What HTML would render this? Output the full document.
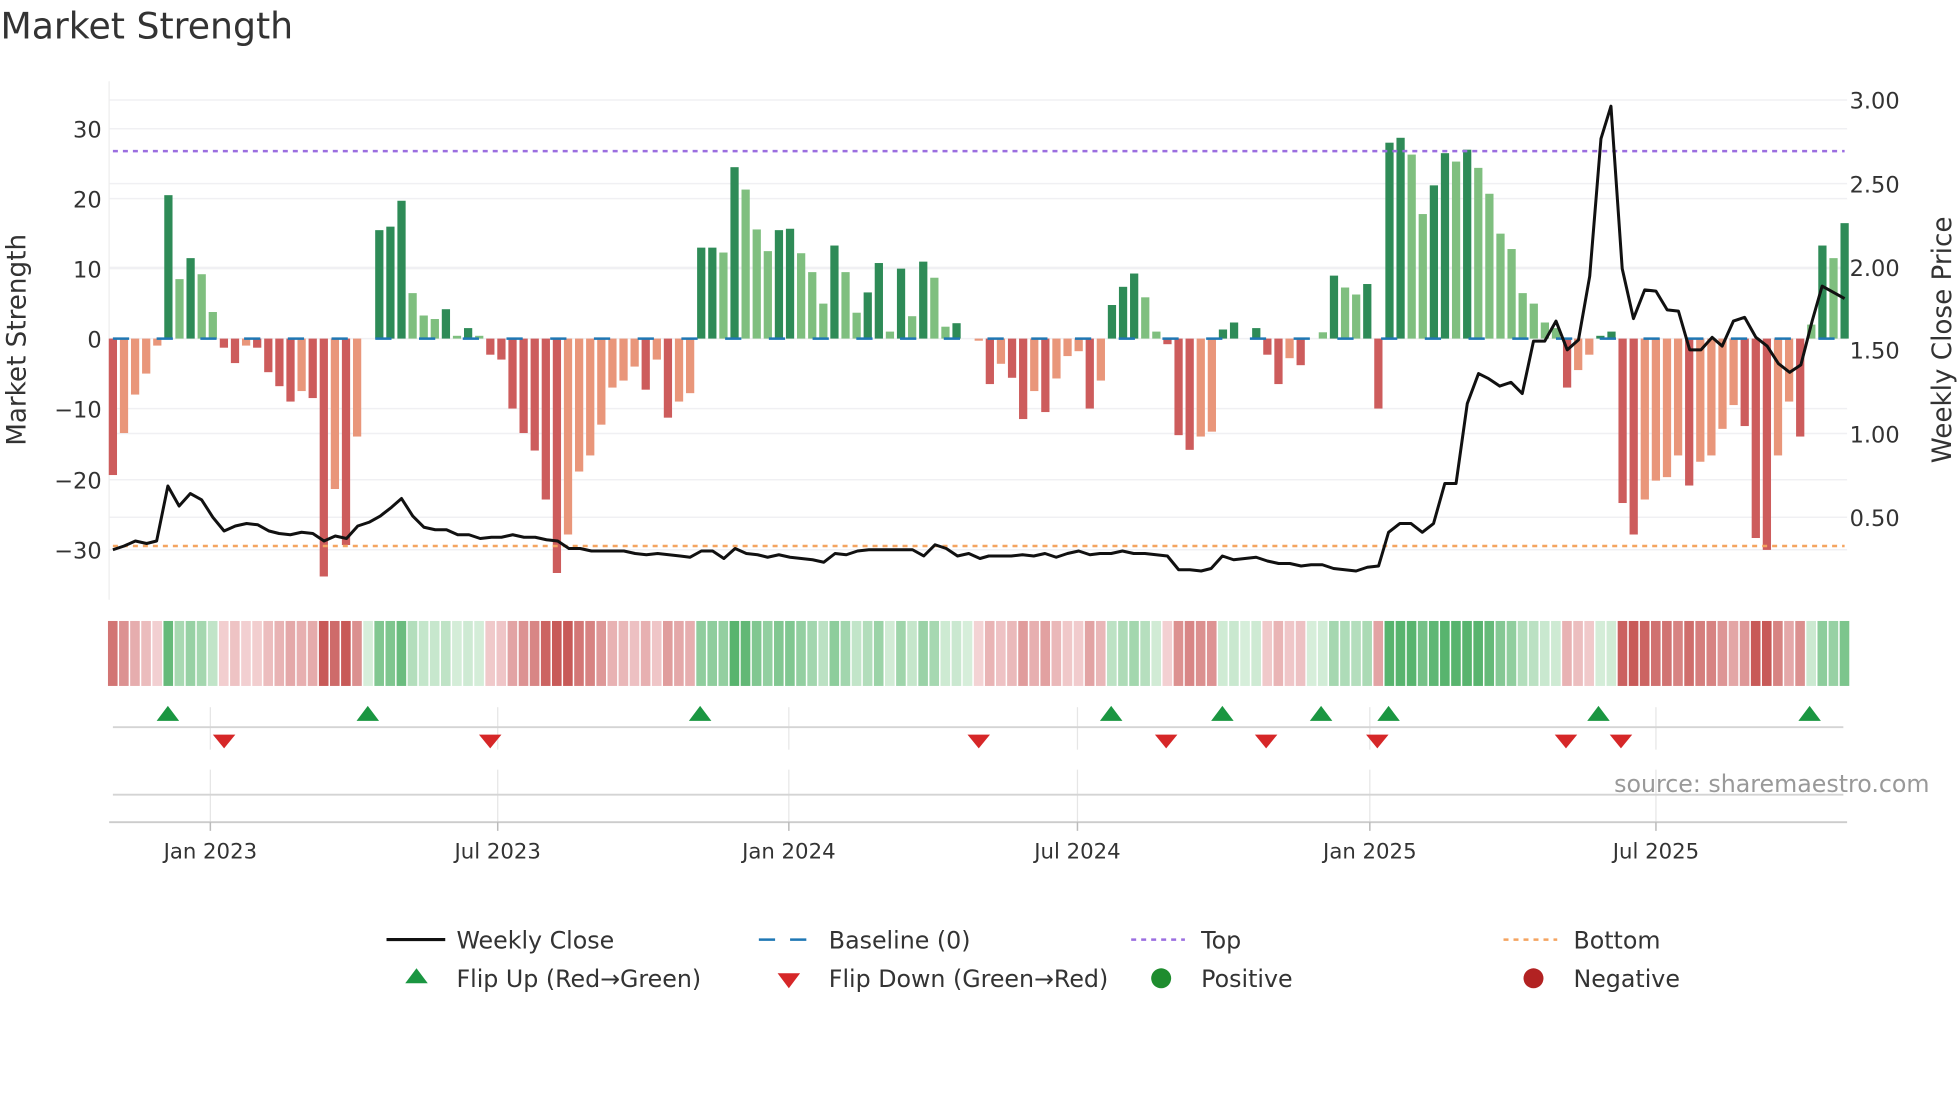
<!DOCTYPE html>
<html><head><meta charset="utf-8"><style>
html,body{margin:0;padding:0;background:#fff;}
svg{display:block;}
text{font-family:"DejaVu Sans","Liberation Sans",sans-serif;fill:#333;}
</style></head><body>
<svg id="s" width="1960" height="1102" viewBox="0 0 1568 882" xmlns="http://www.w3.org/2000/svg">
<rect width="1568" height="882" fill="#fff"/>
<text x="0" y="31" font-size="29">Market Strength</text>
<g id="grid"></g>
<line x1="87" y1="65" x2="87" y2="480" stroke="#eee" stroke-width="1"/>
<g id="bars"></g>
<line x1="90" y1="121" x2="1476" y2="121" stroke="#9b6ee0" stroke-width="2" stroke-dasharray="4,4"/>
<line x1="90" y1="437" x2="1476" y2="437" stroke="#f4a460" stroke-width="2" stroke-dasharray="4,4"/>
<line x1="90" y1="271" x2="1476" y2="271" stroke="#1f77b4" stroke-width="2" stroke-dasharray="13,22"/>
<polyline id="price" fill="none" stroke="#111" stroke-width="2.4" stroke-linejoin="round"/>
<g font-size="18" text-anchor="end">
<text x="81" y="110">30</text><text x="81" y="166">20</text><text x="81" y="222">10</text>
<text x="81" y="278">0</text><text x="81" y="334">−10</text><text x="81" y="391">−20</text><text x="81" y="447">−30</text>
</g>
<g font-size="18">
<text x="1480" y="87">3.00</text><text x="1480" y="154">2.50</text><text x="1480" y="221">2.00</text>
<text x="1480" y="287">1.50</text><text x="1480" y="354">1.00</text><text x="1480" y="421">0.50</text>
</g>
<text transform="translate(20,272) rotate(-90)" font-size="21" text-anchor="middle">Market Strength</text>
<text transform="translate(1561,272) rotate(-90)" font-size="21" text-anchor="middle">Weekly Close Price</text>
<g id="strip"></g>
<g stroke="#e6e6e6" stroke-width="1">
<line x1="168" y1="566" x2="168" y2="600"/><line x1="398" y1="566" x2="398" y2="600"/><line x1="631" y1="566" x2="631" y2="600"/><line x1="862" y1="566" x2="862" y2="600"/><line x1="1096" y1="566" x2="1096" y2="600"/><line x1="1325" y1="566" x2="1325" y2="600"/>
<line x1="168" y1="616" x2="168" y2="658"/><line x1="398" y1="616" x2="398" y2="658"/><line x1="631" y1="616" x2="631" y2="658"/><line x1="862" y1="616" x2="862" y2="658"/><line x1="1096" y1="616" x2="1096" y2="658"/><line x1="1325" y1="616" x2="1325" y2="658"/>
</g>
<line x1="90" y1="582" x2="1475" y2="582" stroke="#d4d4d4" stroke-width="1.5"/>
<line x1="90" y1="636" x2="1475" y2="636" stroke="#d4d4d4" stroke-width="1.5"/>
<line x1="87" y1="658" x2="1478" y2="658" stroke="#ccc" stroke-width="1.5"/>
<g stroke="#bbb" stroke-width="1.2">
<line x1="168" y1="658" x2="168" y2="665"/><line x1="398" y1="658" x2="398" y2="665"/><line x1="631" y1="658" x2="631" y2="665"/><line x1="862" y1="658" x2="862" y2="665"/><line x1="1096" y1="658" x2="1096" y2="665"/><line x1="1325" y1="658" x2="1325" y2="665"/>
</g>
<g id="flips"></g>
<g font-size="17" text-anchor="middle">
<text x="168" y="687">Jan 2023</text><text x="398" y="687">Jul 2023</text><text x="631" y="687">Jan 2024</text>
<text x="862" y="687">Jul 2024</text><text x="1096" y="687">Jan 2025</text><text x="1325" y="687">Jul 2025</text>
</g>
<text x="1544" y="634" font-size="19" text-anchor="end" style="fill:#999">source: sharemaestro.com</text>
<g font-size="19">
<line x1="309" y1="752" x2="356" y2="752" stroke="#111" stroke-width="2.5"/>
<text x="365" y="759">Weekly Close</text>
<line x1="607" y1="752" x2="650" y2="752" stroke="#1f77b4" stroke-width="2" stroke-dasharray="13,12"/>
<text x="663" y="759">Baseline (0)</text>
<line x1="905" y1="752" x2="948" y2="752" stroke="#9b6ee0" stroke-width="2" stroke-dasharray="4,4"/>
<text x="961" y="759">Top</text>
<line x1="1203" y1="752" x2="1246" y2="752" stroke="#f4a460" stroke-width="2" stroke-dasharray="4,4"/>
<text x="1259" y="759">Bottom</text>
<polygon points="333,775 342,787 324,787" fill="#1a9641"/>
<text x="365" y="790">Flip Up (Red→Green)</text>
<polygon points="622,779 640,779 631,791" fill="#d62728"/>
<text x="663" y="790">Flip Down (Green→Red)</text>
<circle cx="929" cy="783" r="8" fill="#1e8c2e"/>
<text x="961" y="790">Positive</text>
<circle cx="1227" cy="783" r="8" fill="#b22222"/>
<text x="1259" y="790">Negative</text>
</g>
</svg>
<script>
var NS="http://www.w3.org/2000/svg";
function el(p,t,a){var e=document.createElementNS(NS,t);for(var k in a)e.setAttribute(k,a[k]);p.appendChild(e);return e;}
var d=[[-19.5,1],[-13.5,0],[-8,0],[-5,0],[-1,0],[20.5,1],[8.5,0],[11.5,1],[9.2,0],[3.8,0],[-1.3,1],[-3.5,1],[-1,0],[-1.3,1],[-4.8,1],[-6.8,1],[-9,1],[-7.5,0],[-8.5,1],[-34,1],[-21.5,0],[-29.5,1],[-14,0],[0,0],[15.5,1],[16,1],[19.7,1],[6.5,0],[3.3,0],[2.8,0],[4.2,1],[0.4,0],[1.5,1],[0.4,0],[-2.3,1],[-3,1],[-10,1],[-13.5,1],[-16,1],[-23,1],[-33.5,1],[-28,0],[-19,0],[-16.7,0],[-12.3,0],[-7,0],[-6,0],[-4,0],[-7.3,1],[-3,0],[-11.3,1],[-9,0],[-7.8,0],[13,1],[13,1],[12.3,0],[24.5,1],[21.3,0],[15.6,0],[12.5,0],[15.5,1],[15.7,1],[12.2,0],[9.5,0],[5,0],[13.3,1],[9.5,0],[3.7,0],[6.6,1],[10.8,1],[1,0],[10,1],[3.2,0],[11,1],[8.7,0],[1.7,0],[2.2,1],[0,0],[-0.3,0],[-6.5,1],[-3.6,0],[-5.6,1],[-11.5,1],[-7.5,0],[-10.5,1],[-5.7,0],[-2.5,0],[-1.8,0],[-10,1],[-6,0],[4.8,1],[7.4,1],[9.3,1],[5.9,0],[1,0],[-0.8,1],[-13.8,1],[-15.9,1],[-14,0],[-13.3,0],[1.3,1],[2.3,1],[0,0],[1.5,1],[-2.3,1],[-6.5,1],[-2.8,0],[-3.8,1],[0,0],[0.9,0],[9,1],[7.3,0],[6.3,0],[7.8,1],[-10,1],[28,1],[28.7,1],[26.3,0],[17.8,0],[21.9,1],[26.5,1],[25.3,0],[27,1],[24.4,0],[20.7,0],[15,0],[12.8,0],[6.5,0],[5,0],[2.3,0],[1.5,0],[-7,1],[-4.5,0],[-2.3,0],[0.4,1],[1,1],[-23.5,1],[-28,1],[-23,0],[-20.3,0],[-19.8,0],[-16.7,0],[-21,1],[-17.6,0],[-16.7,0],[-12.9,0],[-9.5,0],[-12.5,1],[-28.5,1],[-30.2,1],[-16.7,0],[-9,0],[-14,1],[2,0],[13.3,1],[11.5,0],[16.5,1]];
var n=d.length,x0=90,x1=1476,st=(x1-x0)/(n-1),z=271,u=5.6;
var g=document.getElementById('grid');
[103,159,215,327,384,440,80,147,214,347,414].forEach(function(y){el(g,'line',{x1:87,x2:1478,y1:y,y2:y,stroke:'#f0f0f3','stroke-width':1.2});});
el(g,'line',{x1:87,x2:1478,y1:271,y2:271,stroke:'#f0f0f3','stroke-width':1.2});
var b=document.getElementById('bars'),s=document.getElementById('strip');
function mix(a,c,t){return 'rgb('+[0,1,2].map(function(i){return Math.round(a[i]+(c[i]-a[i])*t);}).join(',')+')';}
for(var i=0;i<n;i++){var v=d[i][0],dk=d[i][1],x=x0+i*st;
 if(v!=0){var h=Math.abs(v)*u;var c=v>0?(dk?'#2e8b57':'#7fbf7f'):(dk?'#cd5c5c':'#e9967a');
 el(b,'rect',{x:x-3.3,y:v>0?z-h:z,width:6.6,height:h,fill:c});}
 var t=Math.min(1,Math.abs(v)/30);var col=v>=0?mix([214,238,218],[88,180,110],Math.min(1,t*1.3)):mix([244,212,214],[200,90,88],Math.min(1,t*1.2));
 el(s,'rect',{x:x-st/2+0.5,y:497,width:st-1.2,height:52,fill:col});}
var P=[[90,440],[99,437],[108,433],[117,435],[125,433],[134,389],[143,405],[152,395],[161,400],[170,414],[179,425],[188,421],[197,419],[206,420],[215,425],[223,427],[232,428],[241,426],[250,427],[259,433],[268,429],[277,431],[286,421],[295,418],[304,413],[313,406],[321,399],[330,413],[339,422],[348,424],[357,424],[366,428],[375,428],[384,431],[393,430],[401,430],[410,428],[419,430],[428,430],[437,432],[446,433],[455,439],[464,439],[473,441],[481,441],[490,441],[499,441],[508,443],[517,444],[526,443],[535,444],[544,445],[552,446],[561,441],[570,441],[579,447],[588,439],[597,443],[606,444],[614,446],[623,444],[632,446],[641,447],[650,448],[659,450],[668,443],[677,444],[686,441],[695,440],[703,440],[712,440],[721,440],[730,440],[739,445],[748,436],[757,439],[766,445],[775,443],[784,447],[791,445],[800,445],[809,445],[818,444],[827,445],[836,443],[845,446],[854,443],[863,441],[872,444],[880,443],[889,443],[898,441],[907,443],[916,443],[925,444],[934,445],[943,456],[952,456],[961,457],[969,455],[978,445],[987,448],[996,447],[1005,446],[1014,449],[1023,451],[1032,451],[1041,453],[1049,452],[1058,452],[1067,455],[1076,456],[1085,457],[1094,454],[1103,453],[1111,426],[1120,419],[1129,419],[1138,426],[1147,419],[1156,387],[1165,387],[1174,323],[1183,299],[1191,303],[1200,309],[1209,306],[1218,315],[1227,273],[1236,273],[1245,257],[1254,280],[1263,272],[1272,221],[1281,111],[1289,85],[1298,215],[1307,255],[1316,232],[1325,233],[1334,248],[1343,249],[1352,280],[1361,280],[1370,270],[1378,277],[1387,257],[1396,254],[1405,270],[1414,277],[1423,291],[1432,298],[1441,292],[1450,257],[1458,229],[1467,234],[1476,239]];
document.getElementById('price').setAttribute('points',P.map(function(p){return p.join(',');}).join(' '));
var f=document.getElementById('flips');
[134,294,560,889,978,1057,1111,1279,1448].forEach(function(x){el(f,'polygon',{points:(x)+',565 '+(x+9)+',577 '+(x-9)+',577',fill:'#1a9641'});});
[179,392,783,933,1013,1102,1253,1297].forEach(function(x){el(f,'polygon',{points:(x-9)+',588 '+(x+9)+',588 '+x+',599',fill:'#d62728'});});
</script>
</body></html>
